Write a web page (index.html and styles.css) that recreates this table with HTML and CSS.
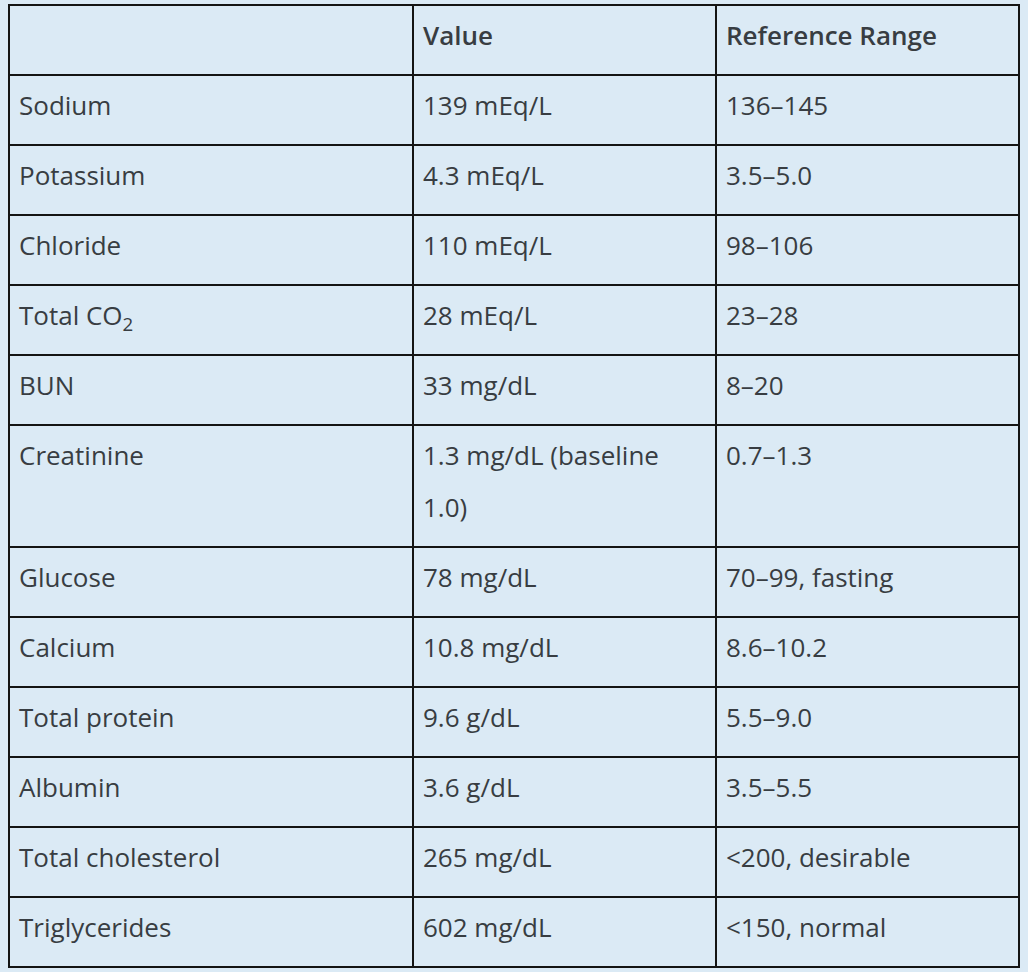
FILE: index.html
```html
<!DOCTYPE html>
<html lang="en">
<head>
<meta charset="utf-8">
<title>Lab values</title>
<link rel="stylesheet" href="styles.css">
</head>
<body>
<table class="labs">
  <colgroup>
    <col class="c1"><col class="c2"><col class="c3">
  </colgroup>
  <thead>
    <tr><th></th><th>Value</th><th>Reference Range</th></tr>
  </thead>
  <tbody>
    <tr><td>Sodium</td><td>139 mEq/L</td><td>136–145</td></tr>
    <tr><td>Potassium</td><td>4.3 mEq/L</td><td>3.5–5.0</td></tr>
    <tr><td>Chloride</td><td>110 mEq/L</td><td>98–106</td></tr>
    <tr><td>Total CO<sub>2</sub></td><td>28 mEq/L</td><td>23–28</td></tr>
    <tr><td>BUN</td><td>33 mg/dL</td><td>8–20</td></tr>
    <tr><td>Creatinine</td><td>1.3 mg/dL (baseline 1.0)</td><td>0.7–1.3</td></tr>
    <tr><td>Glucose</td><td>78 mg/dL</td><td>70–99, fasting</td></tr>
    <tr><td>Calcium</td><td>10.8 mg/dL</td><td>8.6–10.2</td></tr>
    <tr><td>Total protein</td><td>9.6 g/dL</td><td>5.5–9.0</td></tr>
    <tr><td>Albumin</td><td>3.6 g/dL</td><td>3.5–5.5</td></tr>
    <tr><td>Total cholesterol</td><td>265 mg/dL</td><td>&lt;200, desirable</td></tr>
    <tr><td>Triglycerides</td><td>602 mg/dL</td><td>&lt;150, normal</td></tr>
  </tbody>
</table>
</body>
</html>
```
FILE: styles.css
```css
html, body {
  background: #dbeaf5;
}
body {
  margin: 4px 8px 0 8px;
  font-family: "Open Sans", "Noto Sans", sans-serif;
  color: #383d42;
}
.labs {
  width: 1012px;
  border-collapse: collapse;
  table-layout: fixed;
  font-size: 26px;
  line-height: 52px;
}
.c1 { width: 40%; }
.c2 { width: 30%; }
.c3 { width: 30%; }
.labs th,
.labs td {
  border: 2px solid #141414;
  padding: 3px 12px 13px 9px;
  text-align: left;
  vertical-align: top;
}
.labs th {
  font-weight: 600;
}
.labs sub {
  font-size: 0.72em;
  line-height: 0;
  vertical-align: -0.3em;
}
```
